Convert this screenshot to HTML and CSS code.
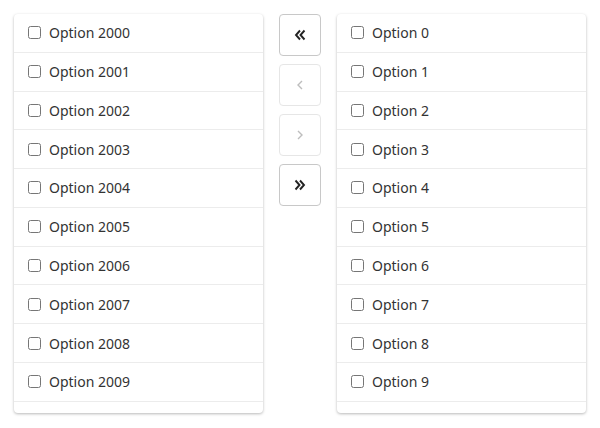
FILE: index.html
```html
<!DOCTYPE html>
<html>
<head>
<meta charset="utf-8">
<link rel="stylesheet" href="styles.css">
</head>
<body>
<div class="transfer">
  <div class="panel">
    <label class="row"><input type="checkbox"><span>Option 2000</span></label>
    <label class="row"><input type="checkbox"><span>Option 2001</span></label>
    <label class="row"><input type="checkbox"><span>Option 2002</span></label>
    <label class="row"><input type="checkbox"><span>Option 2003</span></label>
    <label class="row"><input type="checkbox"><span>Option 2004</span></label>
    <label class="row"><input type="checkbox"><span>Option 2005</span></label>
    <label class="row"><input type="checkbox"><span>Option 2006</span></label>
    <label class="row"><input type="checkbox"><span>Option 2007</span></label>
    <label class="row"><input type="checkbox"><span>Option 2008</span></label>
    <label class="row"><input type="checkbox"><span>Option 2009</span></label>
  </div>
  <div class="controls">
    <button class="btn">
      <svg width="16" height="16" viewBox="0 0 16 16"><path d="M8 3.5 L4 8 L8 12.5 M12.5 3.5 L8.5 8 L12.5 12.5" fill="none" stroke="#222" stroke-width="1.9"/></svg>
    </button>
    <button class="btn disabled">
      <svg width="16" height="16" viewBox="0 0 16 16"><path d="M10 4 L6 8 L10 12" fill="none" stroke="#bdbdbd" stroke-width="1.4"/></svg>
    </button>
    <button class="btn disabled">
      <svg width="16" height="16" viewBox="0 0 16 16"><path d="M6 4 L10 8 L6 12" fill="none" stroke="#bdbdbd" stroke-width="1.4"/></svg>
    </button>
    <button class="btn">
      <svg width="16" height="16" viewBox="0 0 16 16"><path d="M3.5 3.5 L7.5 8 L3.5 12.5 M8 3.5 L12 8 L8 12.5" fill="none" stroke="#222" stroke-width="1.9"/></svg>
    </button>
  </div>
  <div class="panel">
    <label class="row"><input type="checkbox"><span>Option 0</span></label>
    <label class="row"><input type="checkbox"><span>Option 1</span></label>
    <label class="row"><input type="checkbox"><span>Option 2</span></label>
    <label class="row"><input type="checkbox"><span>Option 3</span></label>
    <label class="row"><input type="checkbox"><span>Option 4</span></label>
    <label class="row"><input type="checkbox"><span>Option 5</span></label>
    <label class="row"><input type="checkbox"><span>Option 6</span></label>
    <label class="row"><input type="checkbox"><span>Option 7</span></label>
    <label class="row"><input type="checkbox"><span>Option 8</span></label>
    <label class="row"><input type="checkbox"><span>Option 9</span></label>
  </div>
</div>
</body>
</html>
```
FILE: styles.css
```css
html, body {
  margin: 0;
  padding: 0;
  background: #fff;
}
body {
  font-family: "Noto Sans", sans-serif;
  font-size: 14px;
  color: #333;
}
.transfer {
  display: flex;
  align-items: flex-start;
  padding: 14px;
  gap: 16px;
}
.panel {
  width: 249px;
  height: 399px;
  overflow: hidden;
  background: #fff;
  border-radius: 4px;
  box-shadow: 0 1px 3px rgba(0,0,0,0.28);
  display: flex;
  flex-direction: column;
}
.row {
  flex: 0 0 auto;
  height: 38.78px;
  box-sizing: border-box;
  border-bottom: 1px solid #ececec;
  display: flex;
  align-items: center;
  padding-left: 14px;
  gap: 8px;
}
.row input {
  margin: 0;
  width: 13px;
  height: 13px;
}
.controls {
  display: flex;
  flex-direction: column;
  gap: 8px;
}
.btn {
  width: 42px;
  height: 42px;
  padding: 0;
  border: 1px solid #c8c8c8;
  border-radius: 4px;
  background: #fff;
  display: flex;
  align-items: center;
  justify-content: center;
}
.btn.disabled {
  border-color: #e6e6e6;
}
```
